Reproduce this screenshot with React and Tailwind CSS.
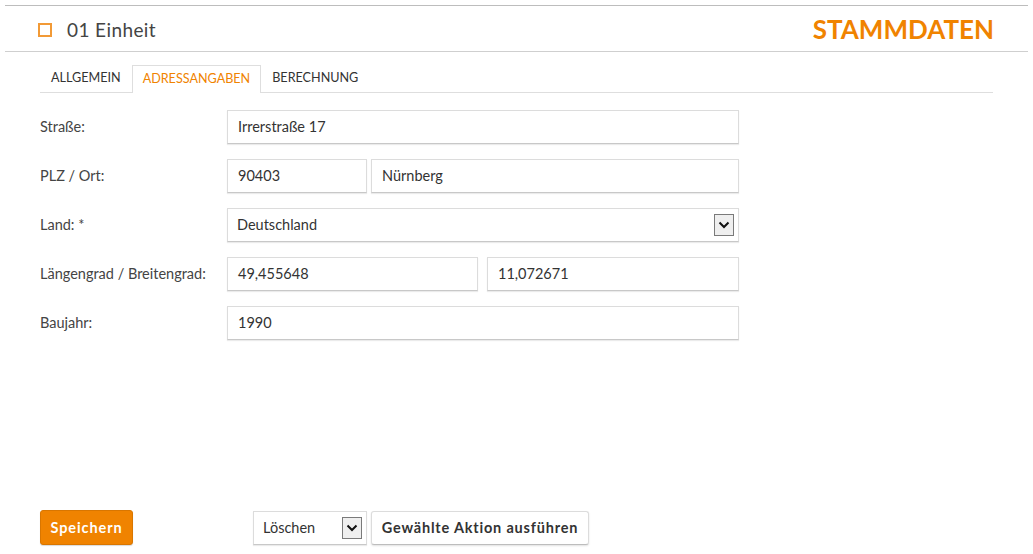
import React from "react";

const font = { fontFamily: "Lato, 'Noto Sans', sans-serif" };

function Input({ value, className = "" }) {
  return (
    <div
      className={`h-[34px] border border-[#dcdcdc] border-b-[#c8c8c8] bg-white flex items-center px-[10px] text-[14.5px] text-[#333] shadow-[0_1px_1px_rgba(0,0,0,0.08)] ${className}`}
    >
      {value}
    </div>
  );
}

function Arrow({ className = "" }) {
  return (
    <div className={`w-[20px] h-[22px] border border-[#7a7a7a] bg-[#efefef] flex items-center justify-center ${className}`}>
      <svg width="12" height="8" viewBox="0 0 12 8">
        <path d="M1.5 1.5 L6 6 L10.5 1.5" fill="none" stroke="#111" strokeWidth="2" />
      </svg>
    </div>
  );
}

function Row({ label, children }) {
  return (
    <div className="flex items-center h-[34px]">
      <div className="w-[187px] text-[14.5px] text-[#444] -mt-[1px]">{label}</div>
      <div className="flex w-[512px]">{children}</div>
    </div>
  );
}

export default function App() {
  return (
    <div className="w-[1033px] h-[554px] bg-white flex flex-col" style={font}>
      <div className="mx-[5px] mt-[5px] border-t border-[#bdbdbd] flex flex-col flex-1">
        <div className="h-[46px] border-b border-[#cfcfcf] flex items-center justify-between pl-[33px] pr-[34px]">
          <div className="flex items-center pt-[3px]">
            <div className="w-[14px] h-[14px] border-2 border-[#f29a36] mr-[15px]" />
            <span className="text-[19px] text-[#444] tracking-[0.4px]">01 Einheit</span>
          </div>
          <div className="text-[26px] font-bold text-[#f08300] leading-none pt-[1px]">STAMMDATEN</div>
        </div>
        <div className="px-[35px] flex flex-col flex-1">
          <div className="mt-[13px] flex h-[28px] border-b border-[#dedede] text-[12.6px] uppercase">
            <div className="px-[11px] flex items-center text-[#333]">Allgemein</div>
            <div className="px-[10px] flex items-center text-[#f08300] border border-b-0 border-[#dedede] bg-white -mb-px">Adressangaben</div>
            <div className="px-[11px] flex items-center text-[#333]">Berechnung</div>
          </div>
          <div className="mt-[17px] flex flex-col gap-[15px]">
            <Row label="Straße:">
              <Input value="Irrerstraße 17" className="flex-1" />
            </Row>
            <Row label="PLZ / Ort:">
              <Input value="90403" className="w-[140px]" />
              <Input value="Nürnberg" className="flex-1 ml-[4px]" />
            </Row>
            <Row label="Land: *">
              <div className="flex-1 h-[34px] border border-[#dcdcdc] border-b-[#c8c8c8] bg-white flex items-center justify-between pl-[9px] pr-[4px] text-[14.5px] text-[#333] shadow-[0_1px_1px_rgba(0,0,0,0.08)]">
                <span>Deutschland</span>
                <Arrow />
              </div>
            </Row>
            <Row label="Längengrad / Breitengrad:">
              <Input value="49,455648" className="w-[251px]" />
              <Input value="11,072671" className="flex-1 ml-[9px]" />
            </Row>
            <Row label="Baujahr:">
              <Input value="1990" className="flex-1" />
            </Row>
          </div>
          <div className="flex-1" />
          <div className="flex items-center h-[35px] mb-[9px]">
            <div className="w-[93px] h-[35px] rounded-[3px] bg-[#f08300] border border-[#d97600] flex items-center justify-center text-white font-bold text-[14.5px] tracking-[0.9px] shadow-[0_1px_1px_rgba(0,0,0,0.15)]">
              Speichern
            </div>
            <div className="ml-[120px] w-[114px] h-[34px] border border-[#dcdcdc] border-b-[#c8c8c8] bg-white flex items-center justify-between pl-[9px] pr-[4px] text-[14.5px] text-[#333] shadow-[0_1px_1px_rgba(0,0,0,0.08)]">
              <span>Löschen</span>
              <Arrow />
            </div>
            <div className="ml-[4px] w-[218px] h-[34px] rounded-[3px] border border-[#dcdcdc] border-b-[#bdbdbd] bg-white flex items-center justify-center text-[14.5px] font-bold text-[#333] tracking-[0.8px] shadow-[0_1px_2px_rgba(0,0,0,0.12)]">
              Gewählte Aktion ausführen
            </div>
          </div>
        </div>
      </div>
    </div>
  );
}
